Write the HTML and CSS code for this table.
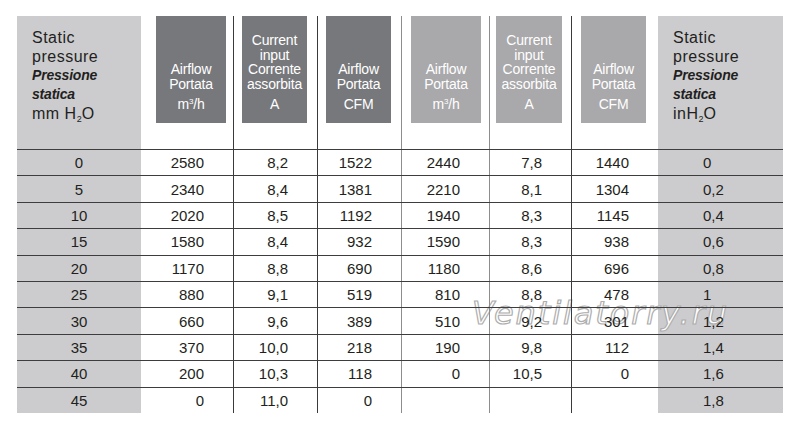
FILE: index.html
```html
<!DOCTYPE html>
<html lang="it">
<head>
<meta charset="utf-8">
<title>Static pressure table</title>
<link rel="stylesheet" href="styles.css">
</head>
<body>
<div class="sheet">
  <div class="row row-head">
    <div class="cell gray side">
      <div class="sl">Static</div>
      <div class="sl">pressure</div>
      <div class="sl it">Pressione</div>
      <div class="sl it">statica</div>
      <div class="sl">mm H<sub>2</sub>O</div>
    </div>
    <div class="cell"><div class="hbox dark b2"><div class="names">Airflow<br>Portata</div><div class="unit">m<sup>3</sup>/h</div></div></div>
    <div class="cell ln-dark"><div class="hbox dark b3"><div class="names">Current<br>input<br>Corrente<br>assorbita</div><div class="unit">A</div></div></div>
    <div class="cell ln-dark"><div class="hbox dark b4"><div class="names">Airflow<br>Portata</div><div class="unit">CFM</div></div></div>
    <div class="cell ln-gray"><div class="hbox light b5"><div class="names">Airflow<br>Portata</div><div class="unit">m<sup>3</sup>/h</div></div></div>
    <div class="cell ln-gray"><div class="hbox light b6"><div class="names">Current<br>input<br>Corrente<br>assorbita</div><div class="unit">A</div></div></div>
    <div class="cell ln-dark"><div class="hbox light b7"><div class="names">Airflow<br>Portata</div><div class="unit">CFM</div></div></div>
    <div class="cell gray side">
      <div class="sl">Static</div>
      <div class="sl">pressure</div>
      <div class="sl it">Pressione</div>
      <div class="sl it">statica</div>
      <div class="sl">inH<sub>2</sub>O</div>
    </div>
  </div>

  <div class="row body"><div class="cell gray c1"><span class="v">0</span></div><div class="cell num"><span class="v">2580</span></div><div class="cell num ln-dark"><span class="v">8,2</span></div><div class="cell num ln-dark"><span class="v">1522</span></div><div class="cell num ln-gray"><span class="v">2440</span></div><div class="cell num ln-gray"><span class="v">7,8</span></div><div class="cell num ln-dark"><span class="v">1440</span></div><div class="cell gray c8"><span class="v">0</span></div></div>
  <div class="row body"><div class="cell gray c1"><span class="v">5</span></div><div class="cell num"><span class="v">2340</span></div><div class="cell num ln-dark"><span class="v">8,4</span></div><div class="cell num ln-dark"><span class="v">1381</span></div><div class="cell num ln-gray"><span class="v">2210</span></div><div class="cell num ln-gray"><span class="v">8,1</span></div><div class="cell num ln-dark"><span class="v">1304</span></div><div class="cell gray c8"><span class="v">0,2</span></div></div>
  <div class="row body"><div class="cell gray c1"><span class="v">10</span></div><div class="cell num"><span class="v">2020</span></div><div class="cell num ln-dark"><span class="v">8,5</span></div><div class="cell num ln-dark"><span class="v">1192</span></div><div class="cell num ln-gray"><span class="v">1940</span></div><div class="cell num ln-gray"><span class="v">8,3</span></div><div class="cell num ln-dark"><span class="v">1145</span></div><div class="cell gray c8"><span class="v">0,4</span></div></div>
  <div class="row body"><div class="cell gray c1"><span class="v">15</span></div><div class="cell num"><span class="v">1580</span></div><div class="cell num ln-dark"><span class="v">8,4</span></div><div class="cell num ln-dark"><span class="v">932</span></div><div class="cell num ln-gray"><span class="v">1590</span></div><div class="cell num ln-gray"><span class="v">8,3</span></div><div class="cell num ln-dark"><span class="v">938</span></div><div class="cell gray c8"><span class="v">0,6</span></div></div>
  <div class="row body"><div class="cell gray c1"><span class="v">20</span></div><div class="cell num"><span class="v">1170</span></div><div class="cell num ln-dark"><span class="v">8,8</span></div><div class="cell num ln-dark"><span class="v">690</span></div><div class="cell num ln-gray"><span class="v">1180</span></div><div class="cell num ln-gray"><span class="v">8,6</span></div><div class="cell num ln-dark"><span class="v">696</span></div><div class="cell gray c8"><span class="v">0,8</span></div></div>
  <div class="row body"><div class="cell gray c1"><span class="v">25</span></div><div class="cell num"><span class="v">880</span></div><div class="cell num ln-dark"><span class="v">9,1</span></div><div class="cell num ln-dark"><span class="v">519</span></div><div class="cell num ln-gray"><span class="v">810</span></div><div class="cell num ln-gray"><span class="v">8,8</span></div><div class="cell num ln-dark"><span class="v">478</span></div><div class="cell gray c8"><span class="v">1</span></div></div>
  <div class="row body"><div class="cell gray c1"><span class="v">30</span></div><div class="cell num"><span class="v">660</span></div><div class="cell num ln-dark"><span class="v">9,6</span></div><div class="cell num ln-dark"><span class="v">389</span></div><div class="cell num ln-gray"><span class="v">510</span></div><div class="cell num ln-gray"><span class="v">9,2</span></div><div class="cell num ln-dark"><span class="v">301</span></div><div class="cell gray c8"><span class="v">1,2</span></div></div>
  <div class="row body"><div class="cell gray c1"><span class="v">35</span></div><div class="cell num"><span class="v">370</span></div><div class="cell num ln-dark"><span class="v">10,0</span></div><div class="cell num ln-dark"><span class="v">218</span></div><div class="cell num ln-gray"><span class="v">190</span></div><div class="cell num ln-gray"><span class="v">9,8</span></div><div class="cell num ln-dark"><span class="v">112</span></div><div class="cell gray c8"><span class="v">1,4</span></div></div>
  <div class="row body"><div class="cell gray c1"><span class="v">40</span></div><div class="cell num"><span class="v">200</span></div><div class="cell num ln-dark"><span class="v">10,3</span></div><div class="cell num ln-dark"><span class="v">118</span></div><div class="cell num ln-gray"><span class="v">0</span></div><div class="cell num ln-gray"><span class="v">10,5</span></div><div class="cell num ln-dark"><span class="v">0</span></div><div class="cell gray c8"><span class="v">1,6</span></div></div>
  <div class="row body last"><div class="cell gray c1"><span class="v">45</span></div><div class="cell num"><span class="v">0</span></div><div class="cell num ln-dark"><span class="v">11,0</span></div><div class="cell num ln-dark"><span class="v">0</span></div><div class="cell num ln-gray"></div><div class="cell num ln-gray"></div><div class="cell num ln-dark"></div><div class="cell gray c8"><span class="v">1,8</span></div></div>

  <div class="watermark">Ventilatorry.ru</div>
</div>
</body>
</html>
```

FILE: styles.css
```css
* { box-sizing: border-box; }

html, body {
  margin: 0;
  padding: 0;
  background: #ffffff;
}

body {
  font-family: "Liberation Sans", Arial, sans-serif;
  color: #231f20;
  width: 800px;
  height: 428px;
  overflow: hidden;
}

.sheet {
  position: relative;
  width: 766px;
  margin-left: 17px;
  padding-top: 16px;
}

.row {
  display: grid;
  grid-template-columns: 124px 92px 84px 84px 88px 82px 87px 125px;
}

.row-head {
  height: 133px;
}

.row.body {
  position: relative;
  z-index: 2;
  height: 26.4px;
  border-top: 1px solid #3d3d3d;
}

.cell {
  min-width: 0;
}

.gray {
  background: #cccccf;
}

.ln-dark {
  border-left: 1px solid #3a3a3a;
}

.ln-gray {
  border-left: 1px solid #8d8d8d;
}

/* header side columns */
.side {
  padding: 12px 0 0 15px;
  color: #231f20;
}

.sl {
  font-size: 16px;
  line-height: 19px;
  letter-spacing: 0.5px;
  white-space: nowrap;
}

.sl.it {
  font-size: 14px;
  font-weight: bold;
  font-style: italic;
  letter-spacing: -0.2px;
}

.sl sub {
  font-size: 9px;
  line-height: 0;
  vertical-align: -3px;
  letter-spacing: 0;
}

/* header boxes */
.hbox {
  height: 107px;
  display: flex;
  flex-direction: column;
  justify-content: flex-end;
  align-items: center;
  padding-bottom: 12px;
  color: #ffffff;
  font-size: 14px;
  line-height: 14.5px;
  text-align: center;
  letter-spacing: -0.2px;
}

.hbox .unit {
  margin-top: 5.5px;
}

.hbox sup {
  font-size: 8px;
  line-height: 0;
  vertical-align: 5px;
}

.dark { background: #77787b; }
.light { background: #a9a8aa; }

.b2 { width: 70px; margin-left: 15px; }
.b3 { width: 65px; margin-left: 8px; }
.b4 { width: 65px; margin-left: 8px; }
.b5 { width: 70px; margin-left: 9px; }
.b6 { width: 66px; margin-left: 6px; }
.b7 { width: 65px; margin-left: 9px; }

/* body cells */
.body .cell {
  display: flex;
  align-items: center;
  font-size: 15px;
  line-height: 1;
}

.body .gray {
  background: transparent;
}

.c1 {
  justify-content: center;
}

.num {
  justify-content: flex-end;
  padding-right: 29px;
}

.c8 {
  justify-content: flex-start;
  padding-left: 45px;
}

.v {
  position: relative;
  z-index: 3;
}

/* gray side columns running behind body rows */
.sheet::before,
.sheet::after {
  content: "";
  position: absolute;
  top: 149px;
  height: 264px;
  background: #cccccf;
  z-index: 0;
}

.sheet::before {
  left: 0;
  width: 124px;
}

.sheet::after {
  left: 641px;
  width: 125px;
}

/* watermark: above gray fill, below numbers */
.watermark {
  position: absolute;
  z-index: 1;
  left: 455px;
  top: 297px;
  font-family: "DejaVu Sans", sans-serif;
  font-style: italic;
  font-size: 32px;
  line-height: 32px;
  letter-spacing: 1.9px;
  color: #ffffff;
  -webkit-text-stroke: 1.2px #adadad;
  white-space: nowrap;
  pointer-events: none;
}
```
